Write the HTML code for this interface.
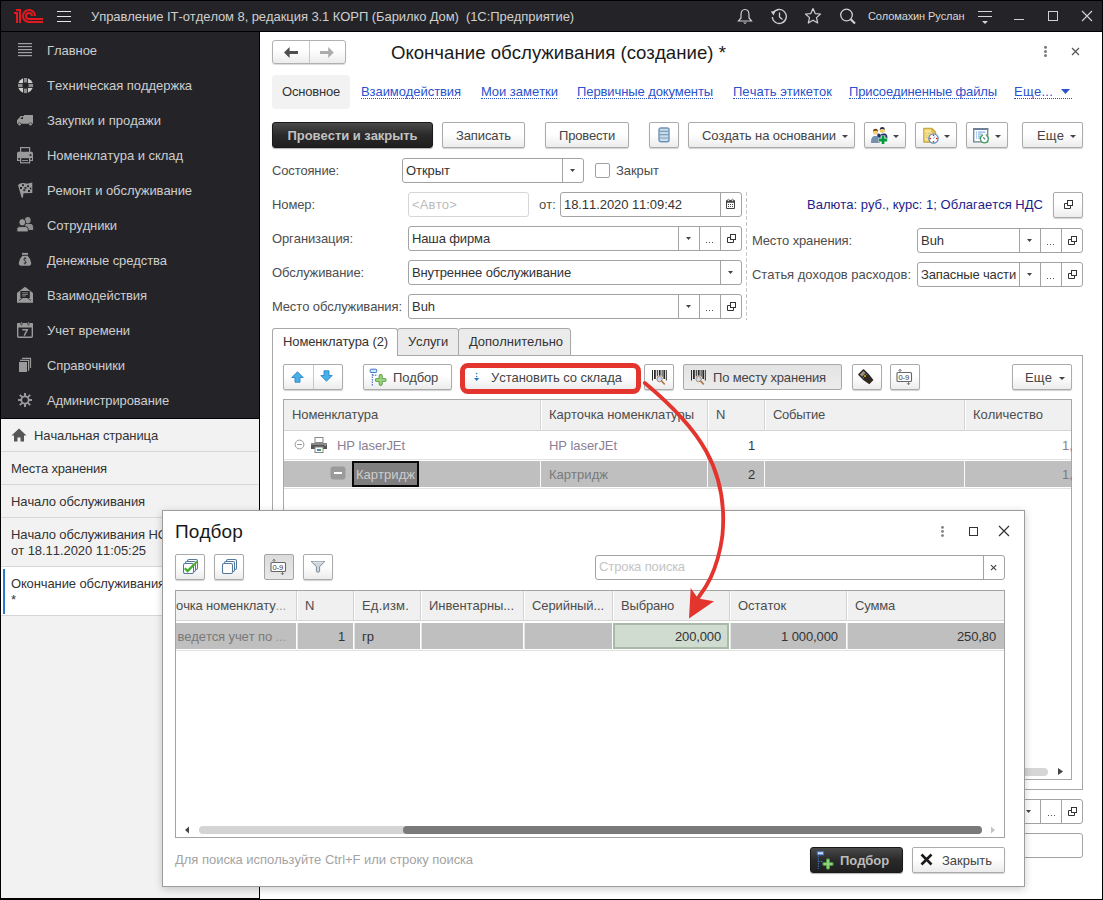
<!DOCTYPE html>
<html><head><meta charset="utf-8">
<style>
*{box-sizing:border-box;margin:0;padding:0}
html,body{width:1103px;height:900px;overflow:hidden;background:#000;font-family:"Liberation Sans",sans-serif;font-size:13px;color:#4d4d4d;font-kerning:none}
.a{position:absolute}
.t{position:absolute;white-space:nowrap;line-height:16px;letter-spacing:-0.12px}
#top{left:1px;top:1px;width:1101px;height:30px;background:#242428}
#side{left:1px;top:32px;width:258px;height:386px;background:#242428}
#open{left:1px;top:419px;width:258px;height:479px;background:#f2f2f2}
#main{left:260px;top:32px;width:842px;height:867px;background:#fff}
.si{color:#cdcdcd}
.ow{position:absolute;left:0;width:258px;border-bottom:1px solid #d9d9d9;color:#333}
.btn{position:absolute;border:1px solid #ababab;border-radius:2px;background:linear-gradient(#fff 0%,#fff 45%,#ececec 100%);box-shadow:0 1px 1px rgba(0,0,0,.18);color:#444;text-align:center;line-height:24px;white-space:nowrap}
.fld{position:absolute;border:1px solid #adadad;border-radius:3px;background:#fff;color:#333;line-height:22px;padding-left:3px;white-space:nowrap;overflow:hidden}
.dv{position:absolute;top:0;bottom:0;width:1px;background:#b5b5b5}
.lnk{position:absolute;white-space:nowrap;color:#3a5fc8;border-bottom:1px dotted #3a5fc8;line-height:14px}
</style></head><body>
<div id="main" class="a"></div>
<!-- TOP BAR -->
<div id="top" class="a"></div>
<svg class="a" style="left:0;top:0" width="50" height="30" viewBox="0 0 50 30"><g fill="#e4191f"><rect x="16" y="9" width="5" height="2"/><rect x="19" y="9" width="2" height="14"/><rect x="14" y="12" width="4" height="2"/><rect x="16" y="12" width="2" height="11"/></g><g fill="none" stroke="#e4191f" stroke-width="2"><path d="M35 16 A6 6 0 1 0 29 22 H43"/><path d="M32 16 A3 3 0 1 0 29 19 H43"/></g></svg>
<div class="a" style="left:57px;top:11px;width:14px;height:1.2px;background:#e6e6e6"></div>
<div class="a" style="left:57px;top:16px;width:14px;height:1.2px;background:#e6e6e6"></div>
<div class="a" style="left:57px;top:21px;width:14px;height:1.2px;background:#e6e6e6"></div>
<div class="t" style="left:91px;top:8.7px;color:#cfcfcf;letter-spacing:-0.07px">Управление IT-отделом 8, редакция 3.1 КОРП (Барилко Дом)&nbsp; (1С:Предприятие)</div>
<!-- bell -->
<svg class="a" style="left:736px;top:8px" width="18" height="17" viewBox="0 0 18 17"><g fill="none" stroke="#d0d0d0" stroke-width="1.2"><path d="M9 1.5 C5.5 1.5 5 4 5 7 V10 L2.5 13 H15.5 L13 10 V7 C13 4 12.5 1.5 9 1.5Z"/></g><path d="M7 14.5 H11 L9 16Z" fill="#d0d0d0"/></svg>
<!-- history -->
<svg class="a" style="left:770px;top:8px" width="18" height="17" viewBox="0 0 18 17"><g fill="none" stroke="#d0d0d0" stroke-width="1.3"><path d="M3.2 5 A7 7 0 1 1 2.3 9"/><path d="M9.5 4.5 V9 L12.5 11.5"/></g><path d="M0.8 3.5 L5.5 3 L3.5 7.5Z" fill="#d0d0d0"/></svg>
<!-- star -->
<svg class="a" style="left:804px;top:7px" width="18" height="18" viewBox="0 0 18 18"><path d="M9 1.5 L11.2 6.6 L16.5 7 L12.5 10.6 L13.7 16 L9 13.2 L4.3 16 L5.5 10.6 L1.5 7 L6.8 6.6Z" fill="none" stroke="#d0d0d0" stroke-width="1.2" stroke-linejoin="round"/></svg>
<!-- search -->
<svg class="a" style="left:839px;top:8px" width="18" height="17" viewBox="0 0 18 17"><circle cx="7.5" cy="7" r="5.8" fill="none" stroke="#d0d0d0" stroke-width="1.3"/><path d="M11.5 11 L16 15.5" stroke="#d0d0d0" stroke-width="2.2"/></svg>
<div class="t" style="left:868px;top:8px;font-size:11px;color:#d8d8d8;letter-spacing:-0.1px">Соломахин Руслан</div>
<div class="a" style="left:978px;top:11px;width:14px;height:1.2px;background:#d6d6d6"></div>
<div class="a" style="left:978px;top:16px;width:14px;height:1.2px;background:#d6d6d6"></div>
<svg class="a" style="left:982px;top:21px" width="6" height="3"><path d="M0 0 H6 L3 3Z" fill="#d6d6d6"/></svg>
<div class="a" style="left:1014px;top:19px;width:10px;height:1.3px;background:#d0d0d0"></div>
<div class="a" style="left:1048px;top:11px;width:10px;height:10px;border:1.3px solid #d0d0d0"></div>
<svg class="a" style="left:1081px;top:10px" width="12" height="12"><path d="M1 1 L11 11 M11 1 L1 11" stroke="#d0d0d0" stroke-width="1.2"/></svg>

<!-- SIDEBAR -->
<div id="side" class="a"></div>
<svg class="a" style="left:0;top:0" width="260" height="419" viewBox="0 0 260 419"><rect x="18" y="43" width="14" height="1.2" fill="#a0a0a0"/><rect x="18" y="46" width="14" height="1.2" fill="#a0a0a0"/><rect x="18" y="49" width="14" height="1.2" fill="#a0a0a0"/><rect x="18" y="52" width="14" height="1.2" fill="#a0a0a0"/><rect x="18" y="55" width="14" height="1.2" fill="#a0a0a0"/><circle cx="25.5" cy="85.5" r="7.6" fill="#cfcfcf"/><rect x="23.1" y="77" width="4.8" height="17" fill="#242428"/><rect x="17" y="83.1" width="17" height="4.8" fill="#242428"/><rect x="24" y="78" width="3" height="4.5" fill="#8e8e8e"/><rect x="24" y="88.6" width="3" height="4.5" fill="#8e8e8e"/><rect x="18" y="84" width="4.5" height="3" fill="#8e8e8e"/><rect x="28.6" y="84" width="4.5" height="3" fill="#8e8e8e"/><path d="M17 120.3 L20.8 116 H24 V115 H33 V123.8 H17Z" fill="#9a9a9a"/><path d="M20.4 118.9 L22 117.1 H23 V118.9Z" fill="#242428"/><circle cx="19.6" cy="124.3" r="1.9" fill="#242428"/><circle cx="30.5" cy="124.3" r="1.9" fill="#242428"/><circle cx="19.6" cy="124.3" r="1.3" fill="#9a9a9a"/><circle cx="30.5" cy="124.3" r="1.3" fill="#9a9a9a"/><rect x="20.6" y="147.6" width="9" height="5.5" fill="none" stroke="#9a9a9a" stroke-width="1.2"/><path d="M18 151.7 H32 L33 152.7 V161 H17 V152.7Z" fill="#9a9a9a"/><rect x="29.6" y="154.2" width="1.8" height="1.8" fill="#242428"/><rect x="18.2" y="158" width="1.8" height="1.8" fill="#242428"/><rect x="30.2" y="158" width="1.8" height="1.8" fill="#242428"/><rect x="20.6" y="157.6" width="9" height="5.2" fill="#242428" stroke="#9a9a9a" stroke-width="1.2"/><rect x="22" y="160.1" width="6" height="0.9" fill="#9a9a9a"/><path d="M18 185 Q20 182.5 24 183 Q27 184 29 183.3 L32.3 182.5 V193 L23.5 193.3 L22.8 198 L21.6 197.5 Z" fill="#9a9a9a"/><g fill="#242428"><rect x="22" y="184.3" width="2" height="1.8"/><rect x="27" y="185.3" width="2" height="1.8"/><rect x="20" y="187" width="2" height="2"/><rect x="24.5" y="187" width="2" height="1.8"/><rect x="29.8" y="187.6" width="1.5" height="1.8"/><rect x="23.3" y="189.3" width="2" height="1.8"/><rect x="28" y="190" width="2" height="2"/></g><ellipse cx="27.8" cy="220.3" rx="2.8" ry="3.3" fill="#8e8e8e"/><path d="M25 224 H31.5 Q33.1 225 33.1 227 V229.9 H26Z" fill="#8e8e8e"/><ellipse cx="22.3" cy="222.3" rx="3.4" ry="3.6" fill="#9a9a9a" stroke="#242428" stroke-width="0.9"/><path d="M16.9 231.9 V228.5 Q17.5 226.8 19.5 226.6 H25.5 Q27.6 226.8 28.2 228.5 V231.9Z" fill="#9a9a9a" stroke="#242428" stroke-width="0.9"/><rect x="22" y="252.9" width="6" height="1.9" fill="#9a9a9a"/><path d="M22.3 255.7 H27.7 Q31.2 259.5 31.2 263 Q31.2 265.8 29 265.8 H21 Q18.8 265.8 18.8 263 Q18.8 259.5 22.3 255.7Z" fill="#9a9a9a"/><path d="M26.2 259 Q25 258.2 24 259 Q23.4 260 24.6 260.6 L25.6 261.2 Q26.6 262 26 262.8 Q25 263.5 23.8 262.8" fill="none" stroke="#242428" stroke-width="1"/><rect x="24.5" y="257.3" width="1" height="1.3" fill="#242428"/><rect x="24.5" y="263.2" width="1" height="1.2" fill="#242428"/><path d="M17 293 L25 286.8 L33 293 V302.8 H17Z" fill="#9a9a9a"/><rect x="20.4" y="291" width="9.4" height="7" fill="#242428"/><rect x="22.2" y="292" width="5.8" height="1.2" fill="#666"/><rect x="22.2" y="293.8" width="5.8" height="1.2" fill="#777"/><rect x="22.2" y="295.3" width="3.6" height="1.2" fill="#777"/><path d="M19 300.5 L23 297.5 M31 300.5 L27 297.5" stroke="#242428" stroke-width="0.8"/><rect x="17.7" y="323.6" width="14.6" height="13.6" rx="1" fill="none" stroke="#9a9a9a" stroke-width="1.4"/><rect x="17" y="323" width="16" height="4.5" rx="1" fill="#9a9a9a"/><rect x="20.7" y="321.8" width="1.4" height="3.4" rx="0.6" fill="#9a9a9a" stroke="#242428" stroke-width="0.6"/><rect x="27.7" y="321.8" width="1.4" height="3.4" rx="0.6" fill="#9a9a9a" stroke="#242428" stroke-width="0.6"/><path d="M22.3 329.8 H27.3 L24.2 335.6" fill="none" stroke="#9a9a9a" stroke-width="1.5"/><rect x="19" y="362" width="8" height="10" fill="#9a9a9a"/><path d="M20 360.3 H28.6 V370.8" fill="none" stroke="#9a9a9a" stroke-width="1.2"/><path d="M22 358.3 H30.5 V368" fill="none" stroke="#9a9a9a" stroke-width="1.2"/><circle cx="25" cy="400" r="3.7" fill="none" stroke="#9a9a9a" stroke-width="1.8"/><g fill="#9a9a9a"><rect x="24" y="393" width="2" height="3"/><rect x="24" y="404" width="2" height="3"/><rect x="18" y="399" width="3" height="2"/><rect x="29" y="399" width="3" height="2"/></g><g stroke="#9a9a9a" stroke-width="1.8"><path d="M19.8 394.8 L22.2 397.2 M30.2 394.8 L27.8 397.2 M19.8 405.2 L22.2 402.8 M30.2 405.2 L27.8 402.8"/></g></svg>
<div class="t si" style="left:47px;top:42.5px;letter-spacing:-0.057px">Главное</div>
<div class="t si" style="left:47px;top:77.5px;letter-spacing:-0.033px">Техническая поддержка</div>
<div class="t si" style="left:47px;top:112.5px;letter-spacing:-0.001px">Закупки и продажи</div>
<div class="t si" style="left:47px;top:147.5px;letter-spacing:-0.023px">Номенклатура и склад</div>
<div class="t si" style="left:47px;top:182.5px;letter-spacing:-0.082px">Ремонт и обслуживание</div>
<div class="t si" style="left:47px;top:217.5px;letter-spacing:-0.128px">Сотрудники</div>
<div class="t si" style="left:47px;top:252.5px;letter-spacing:-0.096px">Денежные средства</div>
<div class="t si" style="left:47px;top:287.5px;letter-spacing:-0.074px">Взаимодействия</div>
<div class="t si" style="left:47px;top:322.5px;letter-spacing:-0.067px">Учет времени</div>
<div class="t si" style="left:47px;top:357.5px;letter-spacing:-0.108px">Справочники</div>
<div class="t si" style="left:47px;top:392.5px;letter-spacing:-0.124px">Администрирование</div>
<!-- OPEN WINDOWS -->
<div id="open" class="a"></div>
<div class="a" style="left:1px;top:418px;width:258px;height:1px;background:#000"></div>
<div class="a" style="left:1px;top:451px;width:258px;height:1px;background:#d7d7d7"></div>
<div class="a" style="left:1px;top:484px;width:258px;height:1px;background:#d7d7d7"></div>
<div class="a" style="left:1px;top:517px;width:258px;height:1px;background:#d7d7d7"></div>
<div class="a" style="left:1px;top:566px;width:258px;height:1px;background:#d7d7d7"></div>
<div class="a" style="left:1px;top:567px;width:258px;height:48px;background:#fff"></div>
<div class="a" style="left:3px;top:569px;width:2px;height:45px;background:#2a7ad2"></div>
<div class="a" style="left:1px;top:615px;width:258px;height:1px;background:#d7d7d7"></div>
<svg class="a" style="left:11px;top:428px" width="16" height="14" viewBox="0 0 16 14"><path d="M8 0.5 L15.5 7.5 H13 V13.5 H9.5 V9.5 H6.5 V13.5 H3 V7.5 H0.5Z" fill="#555"/></svg>
<div class="t" style="left:34px;top:428px;color:#333;letter-spacing:-0.115px">Начальная страница</div>
<div class="t" style="left:11px;top:461px;color:#333;letter-spacing:-0.157px">Места хранения</div>
<div class="t" style="left:11px;top:494px;color:#333;letter-spacing:-0.099px">Начало обслуживания</div>
<div class="t" style="left:11px;top:527px;color:#333;letter-spacing:-0.103px">Начало обслуживания НС</div>
<div class="t" style="left:11px;top:543px;color:#333;letter-spacing:-0.049px">от 18.11.2020 11:05:25</div>
<div class="t" style="left:11px;top:576px;color:#333;letter-spacing:-0.106px">Окончание обслуживания</div>
<div class="t" style="left:11px;top:592px;color:#333;letter-spacing:-0.059px">*</div>
<div class="a" style="left:259px;top:32px;width:1px;height:867px;background:#000"></div>
<!-- FORM HEADER -->
<div class="a" style="left:272px;top:40px;width:74px;height:24px;border:1px solid #b0b0b0;border-radius:3px;background:linear-gradient(#fff 40%,#ececec);box-shadow:0 1px 1px rgba(0,0,0,.15)"></div>
<div class="a" style="left:309px;top:41px;width:1px;height:22px;background:#c8c8c8"></div>
<svg class="a" style="left:282px;top:45px" width="17" height="15" viewBox="0 0 17 15"><path d="M2 7.5 L7.6 2 V6 H16 V9 H7.6 V13Z" fill="#4e4e4e"/></svg>
<svg class="a" style="left:318px;top:45px" width="17" height="15" viewBox="0 0 17 15"><path d="M15.8 7.5 L10.2 2 V6 H2 V9 H10.2 V13Z" fill="#acacac"/></svg>
<div class="t" style="left:391px;top:41.6px;font-size:18.6px;line-height:22px;color:#1a1a1a;letter-spacing:0.03px">Окончание обслуживания (создание) *</div>
<svg class="a" style="left:1043px;top:45px" width="5" height="13"><circle cx="2.5" cy="2.3" r="1.5" fill="#7a7a7a"/><circle cx="2.5" cy="6.5" r="1.5" fill="#7a7a7a"/><circle cx="2.5" cy="10.6" r="1.5" fill="#7a7a7a"/></svg>
<svg class="a" style="left:1071px;top:47px" width="9" height="9"><path d="M1 1 L8 8 M8 1 L1 8" stroke="#555" stroke-width="1.2"/></svg>
<div class="a" style="left:272px;top:75px;width:78px;height:34px;background:#f2f2f2;border-radius:4px"></div>
<div class="t" style="left:282px;top:83.8px;color:#333;letter-spacing:-0.196px">Основное</div>
<div class="t" style="left:361px;top:83.8px;color:#2a52cc;letter-spacing:-0.074px">Взаимодействия</div>
<div class="t" style="left:481px;top:83.8px;color:#2a52cc;letter-spacing:-0.018px">Мои заметки</div>
<div class="t" style="left:577px;top:83.8px;color:#2a52cc;letter-spacing:-0.092px">Первичные документы</div>
<div class="t" style="left:733px;top:83.8px;color:#2a52cc;letter-spacing:0.030px">Печать этикеток</div>
<div class="t" style="left:849px;top:83.8px;color:#2a52cc;letter-spacing:-0.136px">Присоединенные файлы</div>
<div class="t" style="left:1014px;top:83.8px;color:#2a52cc;letter-spacing:0.261px">Еще...</div>
<div class="a" style="left:361px;top:98px;width:99px;border-top:1px dotted #2a52cc"></div>
<div class="a" style="left:481px;top:98px;width:76px;border-top:1px dotted #2a52cc"></div>
<div class="a" style="left:577px;top:98px;width:136px;border-top:1px dotted #2a52cc"></div>
<div class="a" style="left:733px;top:98px;width:96px;border-top:1px dotted #2a52cc"></div>
<div class="a" style="left:849px;top:98px;width:146px;border-top:1px dotted #2a52cc"></div>
<div class="a" style="left:1014px;top:98px;width:58px;border-top:1px dotted #2a52cc"></div>
<svg class="a" style="left:1061px;top:89px" width="9" height="6"><path d="M0 0 H9 L4.5 5Z" fill="#2a52cc"/></svg>
<!-- TOOLBAR -->
<div class="a" style="left:272px;top:122px;width:161px;height:26px;border:1px solid #1a1a1a;border-radius:3px;background:linear-gradient(#4a4a4a,#2a2a2a 50%,#1f1f1f);box-shadow:0 1px 1px rgba(0,0,0,.3)"></div>
<div class="t" style="left:272px;top:127.5px;width:161px;text-align:center;font-weight:bold;color:#c2c2c2;letter-spacing:-0.047px">Провести и закрыть</div>
<div class="btn" style="left:442px;top:122px;width:83px;height:26px"></div>
<div class="t" style="left:442px;top:127.5px;width:83px;text-align:center;color:#444;letter-spacing:-0.105px">Записать</div>
<div class="btn" style="left:545px;top:122px;width:84px;height:26px"></div>
<div class="t" style="left:545px;top:127.5px;width:84px;text-align:center;color:#444;letter-spacing:-0.207px">Провести</div>
<div class="btn" style="left:649px;top:122px;width:30px;height:26px"></div>
<svg class="a" style="left:658px;top:127px" width="12" height="16" viewBox="0 0 12 16"><rect x="1" y="1" width="10" height="13.7" rx="1.8" fill="#c9dced" stroke="#6f93b3" stroke-width="1.4"/><g stroke="#7d9db8" stroke-width="1.2"><path d="M1 4.4 H11 M1 7.7 H11 M1 11 H11"/></g></svg>
<div class="btn" style="left:688px;top:122px;width:167px;height:26px"></div>
<div class="t" style="left:702px;top:127.5px;color:#444;letter-spacing:-0.087px">Создать на основании</div>
<svg class="a" style="left:842px;top:135px" width="6" height="3"><path d="M0 0 H6 L3 3Z" fill="#444"/></svg>
<div class="btn" style="left:864px;top:122px;width:42px;height:26px"></div>
<svg class="a" style="left:870px;top:126px" width="20" height="18" viewBox="0 0 20 18"><path d="M7.5 7.5 C10 7.5 11.5 8.5 11.5 13 H7 Z" fill="#23306a"/><path d="M17.5 13 C17.5 8.8 16.5 7.5 14 7.5 C11.5 7.5 9.5 8.5 9.5 13Z" fill="#2a3570"/><circle cx="12.3" cy="4.3" r="2.6" fill="#f0d070"/><path d="M9.8 3.8 C9.8 1.6 11 1 12.3 1 C13.6 1 14.8 1.6 14.8 3.8 C14 2.8 10.6 2.8 9.8 3.8Z" fill="#2a2a50"/><path d="M1 17 C1 11.5 2.5 10 5.5 10 C8.5 10 10 11.5 10 17Z" fill="#6a93b8"/><path d="M5 10.5 H6 L6.3 16.5 H4.7Z" fill="#e07050"/><circle cx="5.5" cy="6" r="2.6" fill="#f0d070"/><path d="M3 5.5 C3 3.3 4.2 2.7 5.5 2.7 C6.8 2.7 8 3.3 8 5.5 C7.2 4.5 3.8 4.5 3 5.5Z" fill="#7a4010"/><path d="M13 9.5 V18.5 M8.5 14 H17.5" stroke="#fff" stroke-width="4.6"/><path d="M13 9.8 V18.2 M8.8 14 H17.2" stroke="#009a3e" stroke-width="2.8"/></svg>
<svg class="a" style="left:893px;top:135px" width="6" height="3"><path d="M0 0 H6 L3 3Z" fill="#444"/></svg>
<div class="btn" style="left:915px;top:122px;width:42px;height:26px"></div>
<svg class="a" style="left:922px;top:127px" width="18" height="17" viewBox="0 0 18 17"><path d="M1.8 1.5 H10 L13.5 5 V15 H1.8Z" fill="#f7e38f" stroke="#cfa73f" stroke-width="1.3" stroke-linejoin="round"/><path d="M10 1.5 V5 H13.5" fill="none" stroke="#cfa73f" stroke-width="1.2"/><g stroke="#d9bc62" stroke-width="1"><path d="M3.5 6.3 H5 M6 6.3 H8.5 M3.5 8.3 H4.3 M5.3 8.3 H6.5 M3.5 10.3 H6"/></g><circle cx="11.5" cy="11.5" r="4.6" fill="#fff" stroke="#5a8ec4" stroke-width="1.4"/><g fill="#e01010"><circle cx="11.5" cy="8.3" r="0.8"/><circle cx="11.5" cy="14.7" r="0.8"/><circle cx="8.3" cy="11.5" r="0.8"/><circle cx="14.7" cy="11.5" r="0.8"/></g><path d="M11.5 11.5 L13 9.5" stroke="#7aa0d0" stroke-width="1"/></svg>
<svg class="a" style="left:944px;top:135px" width="6" height="3"><path d="M0 0 H6 L3 3Z" fill="#444"/></svg>
<div class="btn" style="left:966px;top:122px;width:42px;height:26px"></div>
<svg class="a" style="left:972px;top:127px" width="18" height="17" viewBox="0 0 18 17"><rect x="1.7" y="1.7" width="14" height="13.2" fill="#fff" stroke="#6b8199" stroke-width="1.3"/><rect x="1.2" y="1.2" width="15" height="1.8" fill="#6b8199"/><g fill="#6fa0e0"><rect x="4" y="4.6" width="1" height="1"/><rect x="6" y="4.6" width="7.5" height="1"/><rect x="4" y="6.6" width="1" height="1"/><rect x="6" y="6.6" width="4.5" height="1"/><rect x="4" y="8.6" width="1" height="1"/><rect x="6" y="8.6" width="2.5" height="1"/><rect x="4" y="10.6" width="1" height="1"/><rect x="6" y="10.6" width="2" height="1"/></g><circle cx="12.6" cy="12" r="4.4" fill="#fff"/><path d="M11 8.1 A4 4 0 1 0 14.5 8.5" fill="none" stroke="#3f9a5a" stroke-width="1.4"/><path d="M13.5 7.2 L15.3 7.6 L14.2 9.2Z" fill="#3f9a5a"/><path d="M11.2 10.4 L13.2 12.4" stroke="#5a6f8a" stroke-width="1.2"/></svg>
<svg class="a" style="left:995px;top:135px" width="6" height="3"><path d="M0 0 H6 L3 3Z" fill="#444"/></svg>
<div class="btn" style="left:1022px;top:122px;width:61px;height:26px"></div>
<div class="t" style="left:1037px;top:127.5px;color:#444;letter-spacing:0.134px">Еще</div>
<svg class="a" style="left:1070px;top:135px" width="6" height="3"><path d="M0 0 H6 L3 3Z" fill="#444"/></svg>
<!-- FIELDS -->
<div class="t" style="left:272px;top:162.5px;color:#4d4d4d;;letter-spacing:-0.162px">Состояние:</div>
<div class="a" style="left:402px;top:158px;width:182px;height:25px;border:1px solid #a3a3a3;border-radius:3px;background:#fff"></div>
<div class="t" style="left:406px;top:162.5px;color:#333;letter-spacing:-0.047px">Открыт</div>
<div class="a" style="left:562px;top:158px;width:1px;height:25px;background:#a3a3a3"></div>
<svg class="a" style="left:570.0px;top:169px" width="5" height="3"><path d="M0 0 H5 L2.5 3Z" fill="#444"/></svg>
<div class="a" style="left:595px;top:163px;width:15px;height:15px;border:1px solid #a0a0a0;border-radius:2px;background:#fff"></div>
<div class="t" style="left:616px;top:162.5px;color:#4d4d4d;;letter-spacing:-0.050px">Закрыт</div>
<div class="t" style="left:272px;top:196.5px;color:#4d4d4d;;letter-spacing:-0.105px">Номер:</div>
<div class="a" style="left:408px;top:192px;width:121px;height:25px;border:1px solid #d6d6d6;border-radius:3px;background:#fff"></div>
<div class="t" style="left:412px;top:196.5px;color:#bcbcbc;letter-spacing:0.176px">&lt;Авто&gt;</div>
<div class="t" style="left:539px;top:196.5px;color:#4d4d4d;;letter-spacing:0.068px">от:</div>
<div class="a" style="left:560px;top:192px;width:182px;height:25px;border:1px solid #a3a3a3;border-radius:3px;background:#fff"></div>
<div class="t" style="left:564px;top:196.5px;color:#333;letter-spacing:-0.067px">18.11.2020 11:09:42</div>
<div class="a" style="left:720px;top:192px;width:1px;height:25px;background:#a3a3a3"></div>
<svg class="a" style="left:725px;top:198px" width="12" height="12" viewBox="0 0 12 12"><rect x="1" y="2" width="9" height="9" rx="1" fill="#454545"/><rect x="2" y="4.8" width="7" height="5.2" rx="0.3" fill="#fff"/><g fill="#454545"><rect x="3" y="6" width="1" height="1"/><rect x="5" y="6" width="1" height="1"/><rect x="7" y="6" width="1" height="1"/><rect x="3" y="8" width="1" height="1"/><rect x="5" y="8" width="1" height="1"/><rect x="7" y="8" width="1" height="1"/></g><circle cx="3.5" cy="2.2" r="1" fill="#fff" stroke="#454545" stroke-width="0.6"/><circle cx="7.5" cy="2.2" r="1" fill="#fff" stroke="#454545" stroke-width="0.6"/></svg>
<div class="t" style="left:272px;top:230.5px;color:#4d4d4d;;letter-spacing:-0.109px">Организация:</div>
<div class="a" style="left:408px;top:226px;width:334px;height:25px;border:1px solid #a3a3a3;border-radius:3px;background:#fff"></div>
<div class="t" style="left:412px;top:230.5px;color:#333;letter-spacing:-0.124px">Наша фирма</div>
<div class="a" style="left:678px;top:226px;width:1px;height:25px;background:#a3a3a3"></div>
<svg class="a" style="left:686.0px;top:237px" width="5" height="3"><path d="M0 0 H5 L2.5 3Z" fill="#444"/></svg>
<div class="a" style="left:699px;top:226px;width:1px;height:25px;background:#a3a3a3"></div>
<svg class="a" style="left:705px;top:242px" width="8" height="2"><rect x="1" y="0" width="1" height="1" fill="#555"/><rect x="4" y="0" width="1" height="1" fill="#555"/><rect x="7" y="0" width="1" height="1" fill="#555"/></svg>
<div class="a" style="left:720px;top:226px;width:1px;height:25px;background:#a3a3a3"></div>
<svg class="a" style="left:726px;top:234px" width="11" height="10" viewBox="0 0 11 10"><path d="M4 3.5 H1.5 V8.5 H7.5 V6" fill="none" stroke="#333" stroke-width="1"/><rect x="4.5" y="0.5" width="5" height="5" fill="none" stroke="#333" stroke-width="1"/></svg>
<div class="t" style="left:272px;top:264.5px;color:#4d4d4d;;letter-spacing:-0.117px">Обслуживание:</div>
<div class="a" style="left:408px;top:260px;width:334px;height:25px;border:1px solid #a3a3a3;border-radius:3px;background:#fff"></div>
<div class="t" style="left:412px;top:264.5px;color:#333;letter-spacing:-0.140px">Внутреннее обслуживание</div>
<div class="a" style="left:720px;top:260px;width:1px;height:25px;background:#a3a3a3"></div>
<svg class="a" style="left:728.0px;top:271px" width="5" height="3"><path d="M0 0 H5 L2.5 3Z" fill="#444"/></svg>
<div class="t" style="left:272px;top:298.5px;color:#4d4d4d;;letter-spacing:-0.095px">Место обслуживания:</div>
<div class="a" style="left:408px;top:294px;width:334px;height:25px;border:1px solid #a3a3a3;border-radius:3px;background:#fff"></div>
<div class="t" style="left:412px;top:298.5px;color:#333;letter-spacing:-0.044px">Buh</div>
<div class="a" style="left:678px;top:294px;width:1px;height:25px;background:#a3a3a3"></div>
<svg class="a" style="left:686.0px;top:305px" width="5" height="3"><path d="M0 0 H5 L2.5 3Z" fill="#444"/></svg>
<div class="a" style="left:699px;top:294px;width:1px;height:25px;background:#a3a3a3"></div>
<svg class="a" style="left:705px;top:310px" width="8" height="2"><rect x="1" y="0" width="1" height="1" fill="#555"/><rect x="4" y="0" width="1" height="1" fill="#555"/><rect x="7" y="0" width="1" height="1" fill="#555"/></svg>
<div class="a" style="left:720px;top:294px;width:1px;height:25px;background:#a3a3a3"></div>
<svg class="a" style="left:726px;top:302px" width="11" height="10" viewBox="0 0 11 10"><path d="M4 3.5 H1.5 V8.5 H7.5 V6" fill="none" stroke="#333" stroke-width="1"/><rect x="4.5" y="0.5" width="5" height="5" fill="none" stroke="#333" stroke-width="1"/></svg>
<div class="a" style="left:746px;top:192px;width:1px;height:128px;background:repeating-linear-gradient(#c8c8c8 0 4px,transparent 4px 6px)"></div>
<div class="t" style="left:743px;width:300px;text-align:right;top:196.5px;color:#1c1c8a;letter-spacing:0.013px">Валюта: руб., курс: 1; Облагается НДС</div>
<div class="btn" style="left:1053px;top:192px;width:30px;height:26px"></div>
<svg class="a" style="left:1063px;top:200px" width="11" height="10" viewBox="0 0 11 10"><path d="M4 3.5 H1.5 V8.5 H7.5 V6" fill="none" stroke="#333" stroke-width="1"/><rect x="4.5" y="0.5" width="5" height="5" fill="none" stroke="#333" stroke-width="1"/></svg>
<div class="t" style="left:752px;top:232.5px;color:#4d4d4d;;letter-spacing:-0.121px">Место хранения:</div>
<div class="a" style="left:917px;top:228px;width:166px;height:25px;border:1px solid #a3a3a3;border-radius:3px;background:#fff"></div>
<div class="t" style="left:921px;top:232.5px;color:#333;letter-spacing:-0.044px">Buh</div>
<div class="a" style="left:1019px;top:228px;width:1px;height:25px;background:#a3a3a3"></div>
<svg class="a" style="left:1027.0px;top:239px" width="5" height="3"><path d="M0 0 H5 L2.5 3Z" fill="#444"/></svg>
<div class="a" style="left:1040px;top:228px;width:1px;height:25px;background:#a3a3a3"></div>
<svg class="a" style="left:1046px;top:244px" width="8" height="2"><rect x="1" y="0" width="1" height="1" fill="#555"/><rect x="4" y="0" width="1" height="1" fill="#555"/><rect x="7" y="0" width="1" height="1" fill="#555"/></svg>
<div class="a" style="left:1061px;top:228px;width:1px;height:25px;background:#a3a3a3"></div>
<svg class="a" style="left:1067px;top:236px" width="11" height="10" viewBox="0 0 11 10"><path d="M4 3.5 H1.5 V8.5 H7.5 V6" fill="none" stroke="#333" stroke-width="1"/><rect x="4.5" y="0.5" width="5" height="5" fill="none" stroke="#333" stroke-width="1"/></svg>
<div class="t" style="left:752px;top:266.5px;color:#4d4d4d;;letter-spacing:-0.036px">Статья доходов расходов:</div>
<div class="a" style="left:917px;top:262px;width:166px;height:25px;border:1px solid #a3a3a3;border-radius:3px;background:#fff"></div>
<div class="t" style="left:921px;top:266.5px;color:#333;letter-spacing:-0.138px">Запасные части</div>
<div class="a" style="left:1019px;top:262px;width:1px;height:25px;background:#a3a3a3"></div>
<svg class="a" style="left:1027.0px;top:273px" width="5" height="3"><path d="M0 0 H5 L2.5 3Z" fill="#444"/></svg>
<div class="a" style="left:1040px;top:262px;width:1px;height:25px;background:#a3a3a3"></div>
<svg class="a" style="left:1046px;top:278px" width="8" height="2"><rect x="1" y="0" width="1" height="1" fill="#555"/><rect x="4" y="0" width="1" height="1" fill="#555"/><rect x="7" y="0" width="1" height="1" fill="#555"/></svg>
<div class="a" style="left:1061px;top:262px;width:1px;height:25px;background:#a3a3a3"></div>
<svg class="a" style="left:1067px;top:270px" width="11" height="10" viewBox="0 0 11 10"><path d="M4 3.5 H1.5 V8.5 H7.5 V6" fill="none" stroke="#333" stroke-width="1"/><rect x="4.5" y="0.5" width="5" height="5" fill="none" stroke="#333" stroke-width="1"/></svg>
<!-- TABS -->
<div class="a" style="left:272px;top:355px;width:811px;height:435px;border:1px solid #a8a8a8;border-top-color:#a8a8a8"></div>
<div class="a" style="left:397px;top:328px;width:62px;height:28px;border:1px solid #a8a8a8;border-radius:3px 3px 0 0;background:#ebebeb"></div>
<div class="a" style="left:458px;top:328px;width:113px;height:28px;border:1px solid #a8a8a8;border-radius:3px 3px 0 0;background:#ebebeb"></div>
<div class="a" style="left:272px;top:328px;width:126px;height:28px;border:1px solid #a8a8a8;border-bottom:none;border-radius:3px 3px 0 0;background:#fff"></div>
<div class="a" style="left:273px;top:355px;width:124px;height:1px;background:#fff;"></div>
<div class="t" style="left:283px;top:333.5px;color:#333;;letter-spacing:-0.118px">Номенклатура (2)</div>
<div class="t" style="left:408px;top:333.5px;color:#333;;letter-spacing:-0.141px">Услуги</div>
<div class="t" style="left:469px;top:333.5px;color:#333;;letter-spacing:-0.022px">Дополнительно</div>
<!-- TABLE TOOLBAR -->
<div class="btn" style="left:283px;top:364px;width:60px;height:26px"></div>
<div class="a" style="left:313px;top:365px;width:1px;height:24px;background:#c8c8c8;"></div>
<svg class="a" style="left:291px;top:371px" width="13" height="12" viewBox="0 0 13 12"><path d="M6.5 0.8 L12.2 6.5 H9 V11.2 H4 V6.5 H0.8Z" fill="#4aaee8" stroke="#2a86c8" stroke-width="0.9" stroke-linejoin="round"/></svg>
<svg class="a" style="left:320px;top:370px" width="13" height="12" viewBox="0 0 13 12"><path d="M6.5 11.2 L12.2 5.5 H9 V0.8 H4 V5.5 H0.8Z" fill="#4aaee8" stroke="#2a86c8" stroke-width="0.9" stroke-linejoin="round"/></svg>
<div class="btn" style="left:363px;top:364px;width:89px;height:26px"></div>
<svg class="a" style="left:368px;top:367px" width="20" height="20" viewBox="0 0 20 20"><rect x="2.2" y="2.2" width="6.5" height="3.3" rx="0.8" fill="#dbe8fa" stroke="#3a76c4" stroke-width="1"/><path d="M4.3 7 V18.5 M4.3 8.2 H9.5" stroke="#2a5fc0" stroke-width="1" stroke-dasharray="1.5 1" fill="none"/><path d="M12.7 9.2 V16.8 M8.9 13 H16.5" stroke="#5a9a48" stroke-width="4.2" stroke-linecap="round"/><path d="M12.7 9.2 V16.8 M8.9 13 H16.5" stroke="#9ad27e" stroke-width="2.3" stroke-linecap="round"/></svg>
<div class="t" style="left:393px;top:369.5px;color:#444;;letter-spacing:-0.177px">Подбор</div>
<div class="btn" style="left:463px;top:365px;width:175px;height:25px"></div>
<svg class="a" style="left:473px;top:372px" width="8" height="10" viewBox="0 0 8 10"><g fill="#2a74c4"><circle cx="3.6" cy="1.5" r="0.75"/><circle cx="3.6" cy="4.4" r="0.75"/><path d="M1 6 H6.3 L3.6 9Z"/></g></svg>
<div class="t" style="left:491px;top:369.5px;color:#444;;letter-spacing:-0.051px">Установить со склада</div>
<div class="a" style="left:460px;top:363px;width:180.5px;height:30.5px;border:5px solid #e3352d;border-radius:8px"></div>
<div class="btn" style="left:644px;top:364px;width:30px;height:26px"></div>
<svg class="a" style="left:651px;top:369px" width="17" height="17" viewBox="0 0 17 17"><g fill="#2a2a2a"><rect x="1" y="1" width="1" height="10.5"/><rect x="3" y="1" width="1.8" height="9"/><rect x="5.8" y="1" width="1" height="7"/><rect x="7.8" y="1" width="1.8" height="6"/><rect x="10.6" y="1" width="1" height="7"/><rect x="12.4" y="1" width="1.6" height="9"/><rect x="14.8" y="1" width="1" height="10.5"/></g><circle cx="8.6" cy="10.2" r="3.6" fill="#fff" opacity="0.7"/><circle cx="8.6" cy="10.2" r="2.7" fill="#c6dbf6" stroke="#b08a6a" stroke-width="1"/><path d="M10.6 12.2 L13.3 14.9" stroke="#b07a50" stroke-width="1.7" stroke-linecap="round"/></svg>
<div class="a" style="left:683px;top:364px;width:159px;height:26px;border:1px solid #a8a8a8;border-radius:2px;background:linear-gradient(#e3e3e3,#ececec)"></div>
<svg class="a" style="left:690px;top:369px" width="17" height="17" viewBox="0 0 17 17"><g fill="#2a2a2a"><rect x="1" y="1" width="1" height="10.5"/><rect x="3" y="1" width="1.8" height="9"/><rect x="5.8" y="1" width="1" height="7"/><rect x="7.8" y="1" width="1.8" height="6"/><rect x="10.6" y="1" width="1" height="7"/><rect x="12.4" y="1" width="1.6" height="9"/><rect x="14.8" y="1" width="1" height="10.5"/></g><circle cx="8.6" cy="10.2" r="3.6" fill="#fff" opacity="0.7"/><circle cx="8.6" cy="10.2" r="2.7" fill="#c6dbf6" stroke="#b08a6a" stroke-width="1"/><path d="M10.6 12.2 L13.3 14.9" stroke="#b07a50" stroke-width="1.7" stroke-linecap="round"/></svg>
<div class="t" style="left:713px;top:369.5px;color:#444;;letter-spacing:-0.163px">По месту хранения</div>
<div class="btn" style="left:852px;top:364px;width:30px;height:26px"></div>
<svg class="a" style="left:856px;top:368px" width="20" height="18" viewBox="0 0 20 18"><g transform="rotate(-46 10 9)"><path d="M6.8 1.5 H13.2 Q14 1.5 14 2.5 V9 L13 16.5 H7 L6 9 V2.5 Q6 1.5 6.8 1.5Z" fill="#2e2820"/><rect x="7.5" y="2.8" width="5" height="3.2" fill="#9a9080"/><circle cx="10" cy="7.6" r="1" fill="#f2b300"/><circle cx="7.6" cy="7.6" r="0.6" fill="#4a90d0"/><circle cx="12.4" cy="7.6" r="0.6" fill="#4a90d0"/></g></svg>
<div class="btn" style="left:890px;top:364px;width:30px;height:26px"></div>
<svg class="a" style="left:895px;top:368px" width="19" height="18" viewBox="0 0 19 18"><rect x="2" y="4.5" width="14.5" height="9" rx="1" fill="#fff" stroke="#666" stroke-width="1.1"/><path d="M5 4.5 V1.3 M3.5 2.8 L5 1.2 L6.5 2.8" stroke="#777" fill="none" stroke-width="1"/><path d="M13.5 13.5 V16.7 M12 15.2 L13.5 16.8 L15 15.2" stroke="#777" fill="none" stroke-width="1"/><text x="3.6" y="11.8" font-size="7.6" font-family="Liberation Sans" fill="#3a3a3a" letter-spacing="-0.2">0-9</text></svg>
<div class="btn" style="left:1012px;top:364px;width:60px;height:26px"></div>
<div class="t" style="left:1025px;top:369.5px;color:#444;;letter-spacing:0.134px">Еще</div>
<svg class="a" style="left:1059px;top:377px" width="6" height="3"><path d="M0 0 H6 L3 3Z" fill="#444"/></svg>
<!-- TABLE -->
<div class="a" style="left:283px;top:399px;width:789px;height:381px;border:1px solid #a8a8a8;background:#fff"></div>
<div class="a" style="left:284px;top:400px;width:787px;height:30px;background:#f0f0f0;"></div>
<div class="a" style="left:284px;top:430px;width:787px;height:1px;background:#d4d4d4;"></div>
<div class="a" style="left:540px;top:400px;width:1px;height:30px;background:#d4d4d4;"></div>
<div class="a" style="left:541px;top:400px;width:1px;height:30px;background:#fff;"></div>
<div class="a" style="left:707px;top:400px;width:1px;height:30px;background:#d4d4d4;"></div>
<div class="a" style="left:708px;top:400px;width:1px;height:30px;background:#fff;"></div>
<div class="a" style="left:764px;top:400px;width:1px;height:30px;background:#d4d4d4;"></div>
<div class="a" style="left:765px;top:400px;width:1px;height:30px;background:#fff;"></div>
<div class="a" style="left:964px;top:400px;width:1px;height:30px;background:#d4d4d4;"></div>
<div class="a" style="left:965px;top:400px;width:1px;height:30px;background:#fff;"></div>
<div class="t" style="left:292px;top:406.5px;color:#4d4d4d;;letter-spacing:-0.115px">Номенклатура</div>
<div class="t" style="left:549px;top:406.5px;color:#4d4d4d;;letter-spacing:-0.038px">Карточка номенклатуры</div>
<div class="t" style="left:716px;top:406.5px;color:#4d4d4d;;letter-spacing:-0.388px">N</div>
<div class="t" style="left:773px;top:406.5px;color:#4d4d4d;;letter-spacing:-0.265px">Событие</div>
<div class="t" style="left:973px;top:406.5px;color:#4d4d4d;;letter-spacing:-0.024px">Количество</div>
<div class="a" style="left:284px;top:459px;width:787px;height:1px;background:#e2e2e2;"></div>
<div class="a" style="left:707px;top:430px;width:1px;height:29px;background:#e0e0e0;"></div>
<svg class="a" style="left:294px;top:439px" width="11" height="11"><circle cx="5.5" cy="5.5" r="4.4" fill="none" stroke="#999" stroke-width="1"/><rect x="3" y="5" width="5" height="1" fill="#999"/></svg>
<svg class="a" style="left:310px;top:437px" width="18" height="16" viewBox="0 0 18 16"><rect x="5" y="0.5" width="8" height="5" fill="#fff" stroke="#888"/><path d="M1 6 H17 V12 H1Z" fill="#555"/><rect x="1" y="6" width="16" height="2" fill="#888"/><rect x="5" y="10" width="8" height="5.5" fill="#fff" stroke="#888"/><rect x="7" y="12" width="2" height="2" fill="#3a8ad0"/><rect x="9" y="12" width="2" height="2" fill="#4aa050"/><rect x="14.5" y="8" width="1.5" height="1" fill="#6c6"/></svg>
<div class="t" style="left:337px;top:437.5px;color:#8a8096;;letter-spacing:-0.057px">HP laserJEt</div>
<div class="t" style="left:549px;top:437.5px;color:#8a8096;;letter-spacing:-0.057px">HP laserJEt</div>
<div class="t" style="left:555px;width:200px;text-align:right;top:437.5px;color:#333;;letter-spacing:-0.230px">1</div>
<div class="t" style="left:1062px;top:437.5px;color:#8a8096;letter-spacing:0.079px">1,</div>
<div class="a" style="left:284px;top:461px;width:787px;height:26px;background:#bfbfbf;"></div>
<div class="a" style="left:284px;top:488px;width:787px;height:1px;background:#e2e2e2;"></div>
<div class="a" style="left:540px;top:461px;width:1px;height:26px;background:#fbfbfb;"></div>
<div class="a" style="left:707px;top:461px;width:1px;height:26px;background:#fbfbfb;"></div>
<div class="a" style="left:764px;top:461px;width:1px;height:26px;background:#fbfbfb;"></div>
<div class="a" style="left:964px;top:461px;width:1px;height:26px;background:#fbfbfb;"></div>
<svg class="a" style="left:330px;top:466px" width="16" height="14"><rect x="0.5" y="0.5" width="15" height="13" rx="3" fill="#9a9a9a"/><rect x="4" y="6" width="8" height="2" fill="#fff"/></svg>
<div class="a" style="left:352px;top:461px;width:67px;height:26px;border:2px solid #0a0a0a;background:#7f7f7f"></div>
<div class="t" style="left:356px;top:466.5px;color:#cdcdcd;;letter-spacing:0.030px">Картридж</div>
<div class="t" style="left:549px;top:466.5px;color:#7a7a7a;;letter-spacing:0.030px">Картридж</div>
<div class="t" style="left:555px;width:200px;text-align:right;top:466.5px;color:#333;;letter-spacing:-0.230px">2</div>
<div class="t" style="left:1062px;top:466.5px;color:#7a7a8a;letter-spacing:0.079px">1,</div>
<div class="a" style="left:1000px;top:768px;width:48px;height:8px;border-radius:4px;background:#d6d6d6"></div>
<svg class="a" style="left:1058px;top:768px" width="5" height="7"><path d="M0 0 L5 3.5 L0 7Z" fill="#444"/></svg>
<div class="a" style="left:985px;top:799px;width:98px;height:25px;border:1px solid #a3a3a3;border-radius:3px;background:#fff"></div>
<div class="a" style="left:1040px;top:799px;width:1px;height:25px;background:#a3a3a3;"></div>
<div class="a" style="left:1061px;top:799px;width:1px;height:25px;background:#a3a3a3;"></div>
<svg class="a" style="left:1026px;top:810px" width="5" height="3"><path d="M0 0 H5 L2.5 3Z" fill="#444"/></svg>
<svg class="a" style="left:1047px;top:815px" width="8" height="2"><rect x="1" y="0" width="1" height="1" fill="#555"/><rect x="4" y="0" width="1" height="1" fill="#555"/><rect x="7" y="0" width="1" height="1" fill="#555"/></svg>
<svg class="a" style="left:1067px;top:807px" width="11" height="10" viewBox="0 0 11 10"><path d="M4 3.5 H1.5 V8.5 H7.5 V6" fill="none" stroke="#333" stroke-width="1"/><rect x="4.5" y="0.5" width="5" height="5" fill="none" stroke="#333" stroke-width="1"/></svg>
<div class="a" style="left:985px;top:833px;width:98px;height:25px;border:1px solid #a3a3a3;border-radius:3px;background:#fff"></div>
<!-- DIALOG -->
<div class="a" style="left:162px;top:510px;width:863px;height:377px;border:1px solid #9d9d9d;background:#fff;box-shadow:0 2px 8px rgba(0,0,0,.2)"></div>
<div class="t" style="left:175px;top:520.8px;font-size:19px;line-height:22px;color:#1a1a1a;letter-spacing:0.1px">Подбор</div>
<svg class="a" style="left:940px;top:525px" width="5" height="13"><circle cx="2.5" cy="2.4" r="1.4" fill="#808080"/><circle cx="2.5" cy="6.4" r="1.4" fill="#808080"/><circle cx="2.5" cy="10.6" r="1.4" fill="#808080"/></svg>
<div class="a" style="left:969px;top:527px;width:9px;height:9px;border:1.3px solid #333"></div>
<svg class="a" style="left:998px;top:525px" width="12" height="12"><path d="M1 1 L11 11 M11 1 L1 11" stroke="#333" stroke-width="1.2"/></svg>
<div class="btn" style="left:175px;top:554px;width:30px;height:26px"></div>
<svg class="a" style="left:182px;top:558px" width="18" height="17" viewBox="0 0 18 17"><rect x="5.5" y="1.5" width="10" height="10" rx="1.5" fill="#fff" stroke="#52789c" stroke-width="1.05"/><path d="M12.5 6.5 L15.2 3.3" stroke="#5cb040" stroke-width="1.8"/><rect x="3.5" y="3.5" width="10" height="10" rx="1.5" fill="#fff" stroke="#52789c" stroke-width="1.05"/><path d="M10.5 8.5 L13.2 5.3" stroke="#5cb040" stroke-width="1.8"/><rect x="1.5" y="5.5" width="10" height="10" rx="1.5" fill="#fff" stroke="#52789c" stroke-width="1.05"/><path d="M2.8 10.2 L5.6 13 L11.8 6.8" fill="none" stroke="#3fae2a" stroke-width="2.3"/></svg>
<div class="btn" style="left:214px;top:554px;width:30px;height:26px"></div>
<svg class="a" style="left:221px;top:558px" width="18" height="17" viewBox="0 0 18 17"><rect x="5.5" y="1.5" width="10" height="10" rx="1.5" fill="#fff" stroke="#52789c" stroke-width="1.05"/><rect x="3.5" y="3.5" width="10" height="10" rx="1.5" fill="#fff" stroke="#52789c" stroke-width="1.05"/><rect x="1.5" y="5.5" width="10" height="10" rx="1.5" fill="#fff" stroke="#52789c" stroke-width="1.05"/></svg>
<div class="a" style="left:264px;top:554px;width:30px;height:26px;border:1px solid #a5a5a5;border-radius:2px;background:linear-gradient(#dcdcdc,#e8e8e8)"></div>
<svg class="a" style="left:269px;top:558px" width="19" height="18" viewBox="0 0 19 18"><rect x="2" y="4.5" width="14.5" height="9" rx="1" fill="#fff" stroke="#666" stroke-width="1.1"/><path d="M5 4.5 V1.3 M3.5 2.8 L5 1.2 L6.5 2.8" stroke="#777" fill="none" stroke-width="1"/><path d="M13.5 13.5 V16.7 M12 15.2 L13.5 16.8 L15 15.2" stroke="#777" fill="none" stroke-width="1"/><text x="3.6" y="11.8" font-size="7.6" font-family="Liberation Sans" fill="#3a3a3a" letter-spacing="-0.2">0-9</text></svg>
<div class="btn" style="left:303px;top:554px;width:30px;height:26px"></div>
<svg class="a" style="left:310px;top:560px" width="16" height="14" viewBox="0 0 16 14"><path d="M1.2 1.5 H14.8 L9.6 6.6 V11.6 Q8 13 6.4 11.6 V6.6 Z" fill="#cfd6dd" stroke="#7d8c98" stroke-width="1" stroke-linejoin="round"/><path d="M2.5 2 H13.5" stroke="#eef2f5" stroke-width="0.8"/></svg>
<div class="a" style="left:595px;top:555px;width:410px;height:25px;border:1px solid #a3a3a3;border-radius:3px;background:#fff"></div>
<div class="a" style="left:983px;top:555px;width:1px;height:25px;background:#a3a3a3;"></div>
<div class="t" style="left:599px;top:559px;color:#c4c4c4;letter-spacing:-0.098px">Строка поиска</div>
<svg class="a" style="left:990px;top:564px" width="7" height="7"><path d="M1 1.2 L6.2 6.2 M6.2 1.2 L1 6.2" stroke="#3a3a3a" stroke-width="1.05"/></svg>
<div class="a" style="left:175px;top:590px;width:830px;height:248px;border:1px solid #a3a3a3;background:#fff"></div>
<div class="a" style="left:176px;top:591px;width:828px;height:29px;background:#f0f0f0;"></div>
<div class="a" style="left:176px;top:620px;width:828px;height:1px;background:#d6d6d6;"></div>
<div class="a" style="left:296px;top:591px;width:1px;height:29px;background:#d2d2d2;"></div>
<div class="a" style="left:297px;top:591px;width:1px;height:29px;background:#fff;"></div>
<div class="a" style="left:353px;top:591px;width:1px;height:29px;background:#d2d2d2;"></div>
<div class="a" style="left:354px;top:591px;width:1px;height:29px;background:#fff;"></div>
<div class="a" style="left:420px;top:591px;width:1px;height:29px;background:#d2d2d2;"></div>
<div class="a" style="left:421px;top:591px;width:1px;height:29px;background:#fff;"></div>
<div class="a" style="left:523px;top:591px;width:1px;height:29px;background:#d2d2d2;"></div>
<div class="a" style="left:524px;top:591px;width:1px;height:29px;background:#fff;"></div>
<div class="a" style="left:612px;top:591px;width:1px;height:29px;background:#d2d2d2;"></div>
<div class="a" style="left:613px;top:591px;width:1px;height:29px;background:#fff;"></div>
<div class="a" style="left:729px;top:591px;width:1px;height:29px;background:#d2d2d2;"></div>
<div class="a" style="left:730px;top:591px;width:1px;height:29px;background:#fff;"></div>
<div class="a" style="left:846px;top:591px;width:1px;height:29px;background:#d2d2d2;"></div>
<div class="a" style="left:847px;top:591px;width:1px;height:29px;background:#fff;"></div>
<div class="t" style="left:176px;top:597.5px;width:110px;height:16px;overflow:hidden;color:#4d4d4d"><span style="position:absolute;right:0;top:0">Карточка номенклату<span style="color:#999">...</span></span></div>
<div class="t" style="left:305px;top:597.5px;color:#4d4d4d;;letter-spacing:-0.388px">N</div>
<div class="t" style="left:362px;top:597.5px;color:#4d4d4d;;letter-spacing:0.194px">Ед.изм.</div>
<div class="t" style="left:429px;top:597.5px;color:#4d4d4d;;letter-spacing:-0.047px">Инвентарны...</div>
<div class="t" style="left:532px;top:597.5px;color:#4d4d4d;;letter-spacing:-0.090px">Серийный...</div>
<div class="t" style="left:621px;top:597.5px;color:#4d4d4d;;letter-spacing:-0.190px">Выбрано</div>
<div class="t" style="left:738px;top:597.5px;color:#4d4d4d;;letter-spacing:-0.095px">Остаток</div>
<div class="t" style="left:855px;top:597.5px;color:#4d4d4d;;letter-spacing:-0.199px">Сумма</div>
<div class="a" style="left:176px;top:623px;width:828px;height:26px;background:#bfbfbf;"></div>
<div class="a" style="left:176px;top:650px;width:828px;height:1px;background:#e2e2e2;"></div>
<div class="a" style="left:296px;top:623px;width:1px;height:26px;background:#fff;"></div>
<div class="a" style="left:297px;top:623px;width:1px;height:26px;background:#e4e4e4;"></div>
<div class="a" style="left:353px;top:623px;width:1px;height:26px;background:#fff;"></div>
<div class="a" style="left:354px;top:623px;width:1px;height:26px;background:#e4e4e4;"></div>
<div class="a" style="left:420px;top:623px;width:1px;height:26px;background:#fff;"></div>
<div class="a" style="left:421px;top:623px;width:1px;height:26px;background:#e4e4e4;"></div>
<div class="a" style="left:523px;top:623px;width:1px;height:26px;background:#fff;"></div>
<div class="a" style="left:524px;top:623px;width:1px;height:26px;background:#e4e4e4;"></div>
<div class="a" style="left:612px;top:623px;width:1px;height:26px;background:#fff;"></div>
<div class="a" style="left:613px;top:623px;width:1px;height:26px;background:#e4e4e4;"></div>
<div class="a" style="left:729px;top:623px;width:1px;height:26px;background:#fff;"></div>
<div class="a" style="left:730px;top:623px;width:1px;height:26px;background:#e4e4e4;"></div>
<div class="a" style="left:846px;top:623px;width:1px;height:26px;background:#fff;"></div>
<div class="a" style="left:847px;top:623px;width:1px;height:26px;background:#e4e4e4;"></div>
<div class="t" style="left:176px;top:628.5px;width:110px;height:16px;overflow:hidden;color:#7a7a7a"><span style="position:absolute;right:0;top:0">Не ведется учет по <span style="color:#999">...</span></span></div>
<div class="t" style="left:145px;width:200px;text-align:right;top:628.5px;color:#333;;letter-spacing:-0.230px">1</div>
<div class="t" style="left:362px;top:628.5px;color:#333;;letter-spacing:0.014px">гр</div>
<div class="a" style="left:613px;top:623px;width:116px;height:26px;border:2px solid #a9b9a7;background:#d0dcd0"></div>
<div class="t" style="left:521px;width:200px;text-align:right;top:628.5px;color:#333;;letter-spacing:-0.142px">200,000</div>
<div class="t" style="left:638px;width:200px;text-align:right;top:628.5px;color:#333;;letter-spacing:-0.093px">1 000,000</div>
<div class="t" style="left:796px;width:200px;text-align:right;top:628.5px;color:#333;;letter-spacing:-0.127px">250,80</div>
<svg class="a" style="left:184px;top:826px" width="6" height="8"><path d="M5 0.5 L1 4 L5 7.5Z" fill="#444"/></svg>
<div class="a" style="left:199px;top:826px;width:783px;height:8px;border-radius:4px;background:#d4d4d4"></div>
<div class="a" style="left:403px;top:826px;width:579px;height:8px;border-radius:4px;background:#7a7a7a"></div>
<svg class="a" style="left:990px;top:826px" width="6" height="8"><path d="M1 0.5 L5 4 L1 7.5Z" fill="#c4c4c4"/></svg>
<div class="t" style="left:175px;top:852px;color:#a3a3a3;letter-spacing:-0.027px">Для поиска используйте Ctrl+F или строку поиска</div>
<div class="a" style="left:810px;top:847px;width:93px;height:26px;border:1px solid #1a1a1a;border-radius:3px;background:linear-gradient(#4a4a4a,#2a2a2a 50%,#1f1f1f);box-shadow:0 1px 1px rgba(0,0,0,.3)"></div>
<svg class="a" style="left:816px;top:850px" width="20" height="20" viewBox="0 0 20 20"><rect x="1.3" y="1.8" width="6.2" height="3" fill="#cfe0f8" stroke="#3a76d0" stroke-width="1"/><path d="M2.3 5.5 V19 M2.3 11.5 H7" stroke="#3a76d0" stroke-width="1" stroke-dasharray="1.5 1" fill="none"/><path d="M12 10.3 V17.7 M8.3 14 H15.7" stroke="#4a9a40" stroke-width="4" stroke-linecap="round"/><path d="M12 10.3 V17.7 M8.3 14 H15.7" stroke="#90d080" stroke-width="2.2" stroke-linecap="round"/></svg>
<div class="t" style="left:840px;top:852.5px;font-weight:bold;color:#bcbcbc;letter-spacing:-0.075px">Подбор</div>
<div class="btn" style="left:912px;top:847px;width:93px;height:26px"></div>
<svg class="a" style="left:920px;top:853px" width="13" height="13"><path d="M1.5 1.5 L11.5 11.5 M11.5 1.5 L1.5 11.5" stroke="#1a1a1a" stroke-width="2.6"/></svg>
<div class="t" style="left:942px;top:852.5px;color:#444;;letter-spacing:-0.010px">Закрыть</div>
<!-- ARROW -->
<svg class="a" style="left:0;top:0" width="1103" height="900" viewBox="0 0 1103 900">
<path d="M644.8 383 C698.4 427.5, 729.1 469.2, 722.3 536.6 C716.9 573.8, 704 590.1, 698 598" fill="none" stroke="#e3352e" stroke-width="3.8" stroke-linecap="round"/>
<path d="M689 618.5 L690.7 588 L698 598.5 L714 601.3Z" fill="#e3352e"/>
</svg>

</body></html>
